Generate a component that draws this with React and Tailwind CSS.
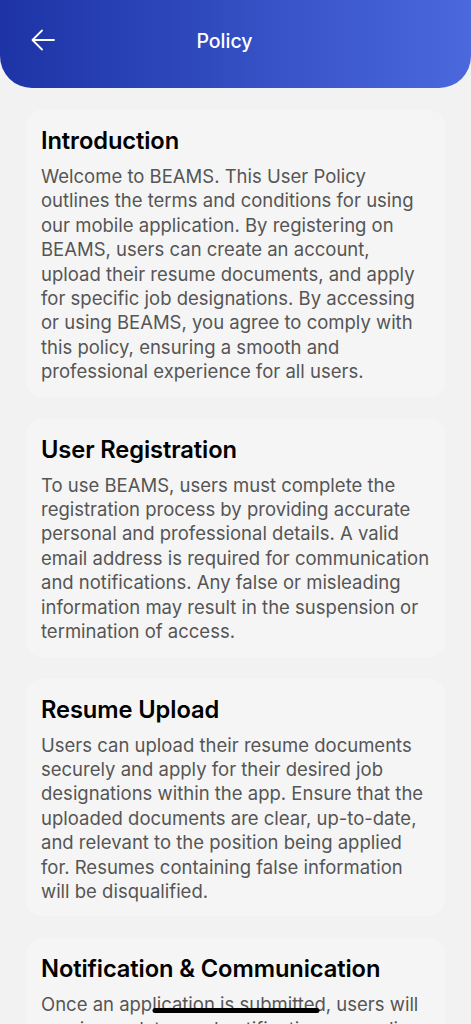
const sections = [
  {
    title: "Introduction",
    body: "Welcome to BEAMS. This User Policy outlines the terms and conditions for using our mobile application. By registering on BEAMS, users can create an account, upload their resume documents, and apply for specific job designations. By accessing or using BEAMS, you agree to comply with this policy, ensuring a smooth and professional experience for all users.",
  },
  {
    title: "User Registration",
    body: "To use BEAMS, users must complete the registration process by providing accurate personal and professional details. A valid email address is required for communication and notifications. Any false or misleading information may result in the suspension or termination of access.",
  },
  {
    title: "Resume Upload",
    body: "Users can upload their resume documents securely and apply for their desired job designations within the app. Ensure that the uploaded documents are clear, up-to-date, and relevant to the position being applied for. Resumes containing false information will be disqualified.",
  },
  {
    title: "Notification & Communication",
    body: "Once an application is submitted, users will receive updates and notifications regarding their application status through the app and via email.",
  },
];

export default function App() {
  return (
    <div
      className="h-[1024px] overflow-hidden bg-[#f2f2f2] relative"
      style={{ fontFamily: "Inter, 'Noto Sans', sans-serif" }}
    >
      <header className="h-[88px] rounded-b-[32px] bg-gradient-to-r from-[#1d33a6] to-[#4b68dd] flex items-start pt-[29px] px-[31px] relative">
        <button className="text-white w-[24px] h-[22px] flex items-center justify-center">
          <svg width="24" height="22" viewBox="0 0 24 22" fill="none" stroke="currentColor" strokeWidth="1.8" strokeLinecap="round" strokeLinejoin="round">
            <path d="M23 11H2" />
            <path d="M11 1.5 1.5 11l9.5 9.5" />
          </svg>
        </button>
        <h1 className="absolute left-0 right-[22px] top-[28px] text-center text-white text-[19.5px] leading-[26px] font-medium pointer-events-none">
          Policy
        </h1>
      </header>

      <main className="px-[26px] pt-[22px] flex flex-col gap-[22px]">
        {sections.map((s) => (
          <section key={s.title} className="bg-[#f5f5f5] rounded-[16px] px-[15px] pt-[16px] pb-[13px]">
            <h2 className="text-[23.7px] font-semibold text-black leading-[30px] tracking-[-0.1px]">{s.title}</h2>
            <p className="mt-[8px] text-[18.5px] leading-[24.4px] text-[#555555]">{s.body}</p>
          </section>
        ))}
      </main>

      <div className="absolute bottom-[11px] left-1/2 -translate-x-1/2 w-[167px] h-[5px] rounded-full bg-black" />
    </div>
  );
}
